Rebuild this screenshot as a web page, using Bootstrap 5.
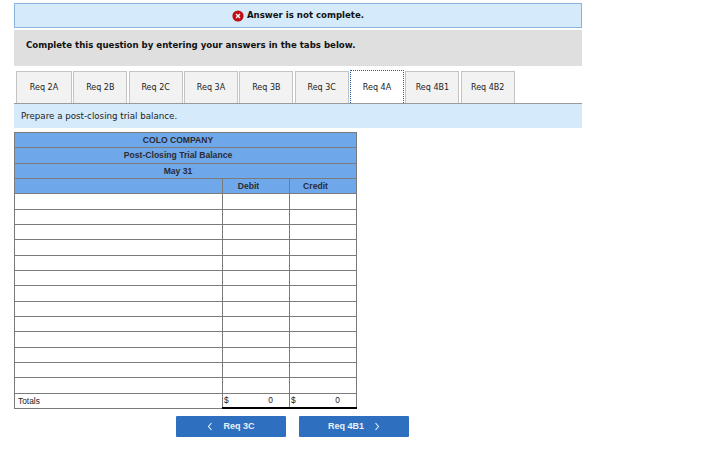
<!DOCTYPE html>
<html lang="en">
<head>
<meta charset="utf-8">
<title>Trial balance</title>
<link rel="stylesheet" href="https://cdn.jsdelivr.net/npm/bootstrap@5.3.0/dist/css/bootstrap.min.css">
<style>
html,body{background:#fff;margin:0;overflow:hidden}
.qpage{width:568px;margin-left:14px;padding-top:3px;font-family:"DejaVu Sans",sans-serif;color:#111}
.notice{height:25px;background:#d5eafa;border:1px solid #8ab4de;font-size:8.6px;font-weight:700;gap:3px}
.instr{height:36px;margin-top:2px;background:#dfdfdf;padding:0 0 5px 12px;font-size:8.6px;font-weight:700}
.tabrow{height:33px;margin-top:5px;padding-left:2px;gap:1.25px;border-bottom:1px solid #9a9a9a}
.qtab{width:54.1px;height:32px;background:#f2f2f2;border:1px solid #c4c4c4;border-bottom:0;font-size:8px;color:#222}
.qtab.first{width:56px}
.qtab.on{background:#fff;height:33px;margin-top:-1px;margin-bottom:-1px;border:1px dotted #1f5c9e;border-bottom:0;padding-top:1px}
.prompt{height:24px;background:#d5eafa;padding:2px 0 0 7px;font-size:8.7px;color:#222}
.sheet{width:343px;height:277px;margin:4px 0 0 0;table-layout:fixed;border-collapse:collapse;font-family:"Liberation Sans",sans-serif;font-size:8.4px;color:#222}
.sheet td{height:15.33px;padding:0 3px;border:1px solid #7b7b7b;line-height:10px;overflow:hidden}
.sheet .hd td{background:#6ea8ea;text-align:center;font-weight:700;font-size:8.6px;color:#2b2b33;padding:0 15px 0 0}
.sheet .sumc{border-top:1px solid #000;border-bottom:2px solid #000;padding:0 16px 1px 1px}
.navbtn{width:110px;height:21px;background:#2e70bf;border-radius:1px;color:#e9f1fa;font-family:"Liberation Sans",sans-serif;font-size:9px;font-weight:700;gap:10px}
.navrow{margin:7px 0 0 162px;gap:13px}
</style>
</head>
<body>
<div class="qpage">
  <div class="notice d-flex align-items-center justify-content-center">
    <svg width="12" height="12" viewBox="0 0 12 12" aria-hidden="true"><circle cx="6" cy="6" r="5.6" fill="#c00d14"/><path d="M4 4l4 4M8 4l-4 4" stroke="#fff" stroke-width="1.4"/></svg>
    <span>Answer is not complete.</span>
  </div>
  <div class="instr d-flex align-items-center">Complete this question by entering your answers in the tabs below.</div>
  <div class="tabrow d-flex">
    <div class="qtab first d-flex align-items-center justify-content-center">Req 2A</div>
    <div class="qtab d-flex align-items-center justify-content-center">Req 2B</div>
    <div class="qtab d-flex align-items-center justify-content-center">Req 2C</div>
    <div class="qtab d-flex align-items-center justify-content-center">Req 3A</div>
    <div class="qtab d-flex align-items-center justify-content-center">Req 3B</div>
    <div class="qtab d-flex align-items-center justify-content-center">Req 3C</div>
    <div class="qtab on d-flex align-items-center justify-content-center">Req 4A</div>
    <div class="qtab d-flex align-items-center justify-content-center">Req 4B1</div>
    <div class="qtab d-flex align-items-center justify-content-center">Req 4B2</div>
  </div>
  <div class="prompt d-flex align-items-center">Prepare a post-closing trial balance.</div>
  <table class="sheet">
    <colgroup><col style="width:208px"><col style="width:67px"><col style="width:67px"></colgroup>
    <tr class="hd"><td colspan="3">COLO COMPANY</td></tr>
    <tr class="hd"><td colspan="3">Post-Closing Trial Balance</td></tr>
    <tr class="hd"><td colspan="3">May 31</td></tr>
    <tr class="hd"><td></td><td>Debit</td><td>Credit</td></tr>
    <tr><td></td><td></td><td></td></tr>
    <tr><td></td><td></td><td></td></tr>
    <tr><td></td><td></td><td></td></tr>
    <tr><td></td><td></td><td></td></tr>
    <tr><td></td><td></td><td></td></tr>
    <tr><td></td><td></td><td></td></tr>
    <tr><td></td><td></td><td></td></tr>
    <tr><td></td><td></td><td></td></tr>
    <tr><td></td><td></td><td></td></tr>
    <tr><td></td><td></td><td></td></tr>
    <tr><td></td><td></td><td></td></tr>
    <tr><td></td><td></td><td></td></tr>
    <tr><td></td><td></td><td></td></tr>
    <tr class="tot"><td>Totals</td>
      <td class="sumc"><div class="d-flex justify-content-between"><span>$</span><span>0</span></div></td>
      <td class="sumc"><div class="d-flex justify-content-between"><span>$</span><span>0</span></div></td>
    </tr>
  </table>
  <div class="navrow d-flex">
    <div class="navbtn d-flex align-items-center justify-content-center">
      <svg width="6" height="9" viewBox="0 0 6 9" aria-hidden="true"><path d="M4.5 1L1.5 4.5l3 3.5" fill="none" stroke="#e9f1fa" stroke-width="1.1"/></svg>
      <span>Req 3C</span>
    </div>
    <div class="navbtn d-flex align-items-center justify-content-center">
      <span>Req 4B1</span>
      <svg width="6" height="9" viewBox="0 0 6 9" aria-hidden="true"><path d="M1.5 1l3 3.5-3 3.5" fill="none" stroke="#e9f1fa" stroke-width="1.1"/></svg>
    </div>
  </div>
</div>
</body>
</html>
